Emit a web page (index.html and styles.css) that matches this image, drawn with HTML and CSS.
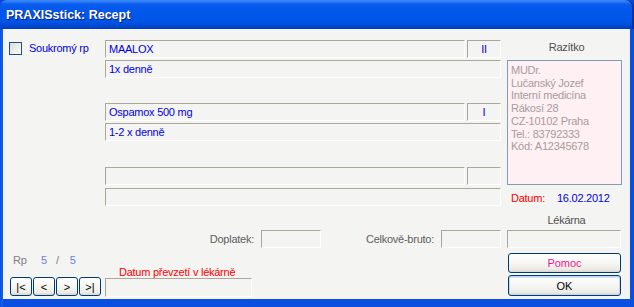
FILE: index.html
```html
<!DOCTYPE html>
<html>
<head>
<meta charset="utf-8">
<link rel="stylesheet" href="styles.css">
</head>
<body>
<div class="window">
  <div class="titlebar"><span class="title">PRAXISstick: Recept</span></div>
  <div class="client">
    <div class="col-left">
      <div class="chk"><span class="box"></span><span class="chk-label">Soukromý rp</span></div>
      <div class="rp"><span class="rp-l">Rp</span><span class="rp-n">5</span><span class="rp-s">/</span><span class="rp-n">5</span></div>
      <div class="nav">
        <button class="xpbtn navbtn">|&lt;</button>
        <button class="xpbtn navbtn">&lt;</button>
        <button class="xpbtn navbtn">&gt;</button>
        <button class="xpbtn navbtn">&gt;|</button>
      </div>
    </div>
    <div class="col-mid">
      <div class="pair">
        <div class="frow"><div class="field main">MAALOX</div><div class="field small">II</div></div>
        <div class="field">1x denně</div>
      </div>
      <div class="pair p2">
        <div class="frow"><div class="field main">Ospamox 500 mg</div><div class="field small">I</div></div>
        <div class="field">1-2 x denně</div>
      </div>
      <div class="pair p3">
        <div class="frow"><div class="field main"></div><div class="field small"></div></div>
        <div class="field"></div>
      </div>
      <div class="totals">
        <span class="tlabel">Doplatek:</span><div class="field tfield"></div>
        <span class="tlabel wide">Celkově-bruto:</span><div class="field tfield"></div>
      </div>
      <div class="pickup">
        <div class="plabel">Datum převzetí v lékárně</div>
        <div class="field pfield"></div>
      </div>
    </div>
    <div class="col-right">
      <div class="rlabel">Razítko</div>
      <div class="stamp">
        <div>MUDr.</div>
        <div>Lučanský Jozef</div>
        <div>Interní medicína</div>
        <div>Rákosí 28</div>
        <div>CZ-10102 Praha</div>
        <div>Tel.: 83792333</div>
        <div>Kód: A12345678</div>
      </div>
      <div class="datum"><span class="dl">Datum:</span><span class="dv">16.02.2012</span></div>
      <div class="rlabel lek">Lékárna</div>
      <div class="field lfield"></div>
      <button class="xpbtn bigbtn pomoc">Pomoc</button>
      <button class="xpbtn bigbtn ok">OK</button>
    </div>
  </div>
</div>
</body>
</html>
```
FILE: styles.css
```css
html, body { margin: 0; padding: 0; }
body {
  width: 634px; height: 307px; overflow: hidden;
  font-family: "Liberation Sans", Arial, sans-serif;
  font-size: 11px;
  background: #0a44d8;
}
.window {
  width: 634px; height: 307px; box-sizing: border-box;
  display: flex; flex-direction: column;
  background: linear-gradient(90deg, #0a4fe0 0, #1660f0 3px, #0a4fe0 3px);
  border-radius: 7px 7px 0 0;
}
.titlebar {
  height: 29px; flex: none;
  display: flex; align-items: center;
  padding-left: 6px;
  border-radius: 7px 7px 0 0;
  background: linear-gradient(180deg, #3d8cf8 0, #2a78f6 2px, #0a5cec 4px, #0058ea 12px, #0054e4 22px, #0048d0 26px, #003cb8 29px);
  box-shadow: inset -2px 0 0 #0030a0;
}
.title {
  color: #fff; font-weight: bold; font-size: 12.5px;
  font-family: "Liberation Sans", Arial, sans-serif;
  text-shadow: 1px 1px 0 #0a1d7a;
  margin-top: 1px;
}
.client {
  height: 270px; flex: none;
  margin: 0 4px 0 3px;
  background: #f4f4f3;
  display: flex;
  letter-spacing: -0.25px;
}
.col-left {
  width: 102px; flex: none;
  display: flex; flex-direction: column;
}
.chk { display: flex; align-items: center; margin: 13px 0 0 6px; height: 13px; }
.box {
  width: 13px; height: 13px; box-sizing: border-box;
  border: 1px solid #1c5180;
  background: linear-gradient(135deg, #dcdcd7 0, #f0f0ea 60%, #fbfbf9 100%);
}
.chk-label { color: #0000e6; margin-left: 7px; line-height: 13px; }
.rp { margin-top: auto; margin-left: 10px; line-height: 13px; display: flex; }
.rp-l { color: #808080; width: 28px; }
.rp-n { color: #6a82e8; }
.rp-s { color: #808080; margin: 0 11px 0 9px; }
.nav { display: flex; gap: 1px; margin: 10px 0 3px 7px; }
.xpbtn {
  box-sizing: border-box;
  border: 1px solid #003c74;
  border-radius: 3px;
  background: linear-gradient(180deg, #ffffff 0, #f6f6f3 50%, #ecebe5 85%, #d8d5cb 100%);
  font-family: "Liberation Sans", Arial, sans-serif;
  font-size: 11px; color: #000;
  padding: 0; margin: 0;
}
.navbtn { width: 22px; height: 19px; line-height: 16px; }
.col-mid { width: 396px; flex: none; display: flex; flex-direction: column; }
.pair { display: flex; flex-direction: column; gap: 2px; margin-top: 11px; }
.pair.p2 { margin-top: 25px; }
.pair.p3 { margin-top: 26px; gap: 3px; }
.frow { display: flex; gap: 2px; }
.field {
  box-sizing: border-box; height: 18px;
  border-top: 1px solid #aca899; border-left: 1px solid #aca899;
  border-right: 1px solid #ffffff; border-bottom: 1px solid #ffffff;
  background: #f4f4f3;
  color: #0000e6; line-height: 16px; padding-left: 3px;
}
.field.main { flex: 1; }
.field.small { width: 34px; flex: none; text-align: center; padding-left: 0; }
.totals { display: flex; align-items: center; justify-content: flex-end; margin-top: 24px; }
.tlabel { color: #606060; margin-right: 7px; }
.tlabel.wide { width: 113px; text-align: right; margin-right: 7px; }
.tfield { width: 60px; flex: none; }
.pickup { margin-top: 18px; }
.plabel { color: #ff0000; line-height: 12px; padding-left: 14px; }
.pfield { width: 147px; height: 19px; }
.col-right { width: 115px; flex: none; margin-left: 6px; display: flex; flex-direction: column; }
.rlabel { color: #505050; text-align: center; line-height: 14px; margin-top: 11px; padding-left: 4px; }
.rlabel.lek { margin-top: 8px; }
.stamp {
  margin-top: 6px; height: 125px; box-sizing: border-box;
  border: 1px solid #7f9db9;
  background: #fff0f3;
  color: #a89c9c;
  padding: 3px 0 0 3px;
  line-height: 12.7px;
}
.datum { margin-top: 6px; line-height: 14px; display: flex; padding-left: 4px; }
.dl { color: #ff0000; width: 46px; }
.dv { color: #0000e6; }
.lfield { margin-top: 3px; width: 114px; }
.bigbtn { width: 113px; margin-left: 1px; letter-spacing: 0; }
.pomoc { margin-top: 5px; height: 20px; color: #ee1490; }
.ok { margin-top: 2px; height: 21px; box-shadow: inset 0 0 0 1px #c4d6f4, inset 0 1px 0 1px #cee0fb; }
```
